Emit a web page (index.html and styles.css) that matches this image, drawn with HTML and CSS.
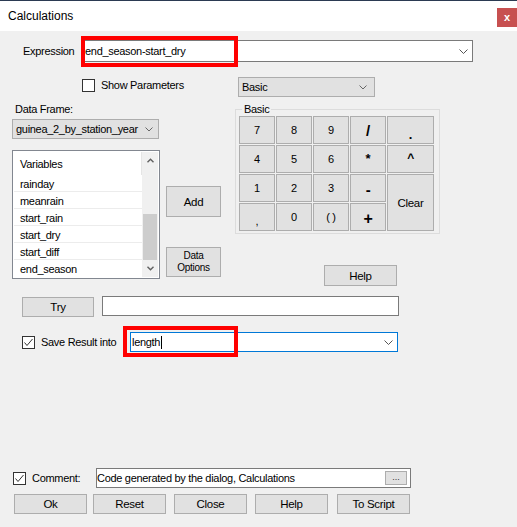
FILE: index.html
```html
<!DOCTYPE html>
<html>
<head>
<meta charset="utf-8">
<title>Calculations</title>
<link rel="stylesheet" href="styles.css">
</head>
<body>
<div class="titlebar">
  <span class="title">Calculations</span>
  <span class="close">x</span>
</div>
<div class="dialog">
  <div class="expr-row">
    <span class="expr-label">Expression</span>
    <div class="combo expr-combo">
      <span>end_season-start_dry</span>
      <svg class="chev" width="9" height="5" viewBox="0 0 9 5"><polyline points="0.5,0.5 4.5,4.5 8.5,0.5" fill="none" stroke="#555" stroke-width="1"/></svg>
      <div class="redmark expr-mark"></div>
    </div>
  </div>

  <div class="params-row">
    <label class="show-params">
      <span class="check"></span>
      <span>Show Parameters</span>
    </label>
    <div class="combo grey basic-combo">
      <span>Basic</span>
      <svg class="chev" width="8" height="5" viewBox="0 0 8 5"><polyline points="0.5,0.5 4,4 7.5,0.5" fill="none" stroke="#666" stroke-width="1"/></svg>
    </div>
  </div>

  <div class="main">
    <div class="left-col">
      <div class="df-label">Data Frame:</div>
      <div class="combo grey df-combo">
        <span>guinea_2_by_station_year</span>
        <svg class="chev" width="8" height="5" viewBox="0 0 8 5"><polyline points="0.5,0.5 4,4 7.5,0.5" fill="none" stroke="#666" stroke-width="1"/></svg>
      </div>
      <div class="listbox">
        <div class="list">
          <div class="list-head">Variables</div>
          <div class="list-item">rainday</div>
          <div class="list-item">meanrain</div>
          <div class="list-item">start_rain</div>
          <div class="list-item">start_dry</div>
          <div class="list-item">start_diff</div>
          <div class="list-item last">end_season</div>
        </div>
        <div class="scrollbar">
          <div class="sb-arrow">
            <svg width="7" height="5" viewBox="0 0 7 5"><polyline points="0.5,4.2 3.5,1.2 6.5,4.2" fill="none" stroke="#606060" stroke-width="1.4"/></svg>
          </div>
          <div class="sb-track"></div>
          <div class="sb-thumb"></div>
          <div class="sb-arrow">
            <svg width="7" height="5" viewBox="0 0 7 5"><polyline points="0.5,0.8 3.5,3.8 6.5,0.8" fill="none" stroke="#606060" stroke-width="1.4"/></svg>
          </div>
        </div>
      </div>
    </div>

    <div class="mid-col">
      <button class="btn add-btn">Add</button>
      <button class="btn dataopt-btn">Data<br>Options</button>
    </div>

    <div class="right-col">
      <div class="groupbox">
        <span class="legend">Basic</span>
        <div class="keypad">
          <button class="btn key">7</button>
          <button class="btn key">8</button>
          <button class="btn key">9</button>
          <button class="btn key op slash">/</button>
          <button class="btn key op dot">.</button>
          <button class="btn key">4</button>
          <button class="btn key">5</button>
          <button class="btn key">6</button>
          <button class="btn key op star">*</button>
          <button class="btn key op caret">^</button>
          <button class="btn key">1</button>
          <button class="btn key">2</button>
          <button class="btn key">3</button>
          <button class="btn key op minus">-</button>
          <button class="btn key clear">Clear</button>
          <button class="btn key comma">,</button>
          <button class="btn key">0</button>
          <button class="btn key">( )</button>
          <button class="btn key op plus">+</button>
        </div>
      </div>
      <button class="btn help-btn">Help</button>
    </div>
  </div>

  <div class="try-row">
    <button class="btn try-btn">Try</button>
    <div class="textbox try-input"></div>
  </div>

  <div class="save-row">
    <label class="save-label">
      <span class="check checked">
        <svg width="11" height="11" viewBox="0 0 11 11"><polyline points="1.5,5.5 4,8.5 9.5,2" fill="none" stroke="#333" stroke-width="1"/></svg>
      </span>
      <span>Save Result into</span>
    </label>
    <div class="combo save-combo">
      <span class="save-text">length<span class="cursor"></span></span>
      <svg class="chev" width="9" height="5" viewBox="0 0 9 5"><polyline points="0.5,0.5 4.5,4.5 8.5,0.5" fill="none" stroke="#555" stroke-width="1"/></svg>
      <div class="redmark save-mark"></div>
    </div>
  </div>

  <div class="comment-row">
    <label class="comment-label">
      <span class="check checked">
        <svg width="11" height="11" viewBox="0 0 11 11"><polyline points="1.5,5.5 4,8.5 9.5,2" fill="none" stroke="#333" stroke-width="1"/></svg>
      </span>
      <span>Comment:</span>
    </label>
    <div class="textbox comment-input">
      <span>Code generated by the dialog, Calculations</span>
      <button class="btn dots">...</button>
    </div>
  </div>

  <div class="buttons-row">
    <button class="btn bottom b-ok">Ok</button>
    <button class="btn bottom b-reset">Reset</button>
    <button class="btn bottom b-close">Close</button>
    <button class="btn bottom b-help">Help</button>
    <button class="btn bottom b-script">To Script</button>
  </div>
</div>
</body>
</html>
```

FILE: styles.css
```css
* { box-sizing: border-box; }
html, body { margin: 0; padding: 0; }
body {
  width: 517px;
  height: 527px;
  overflow: hidden;
  background: #f0f0f0;
  font-family: "Liberation Sans", Arial, sans-serif;
  font-size: 11px;
  letter-spacing: -0.3px;
  color: #000;
}

.titlebar {
  height: 31px;
  background: #fff;
  border-top: 1px solid #2b3a52;
  display: flex;
  justify-content: space-between;
  align-items: flex-start;
}
.title {
  font-size: 12px;
  letter-spacing: 0;
  line-height: 14px;
  margin: 8px 0 0 8px;
}
.close {
  width: 20px;
  height: 19px;
  margin-top: 7px;
  background: #c75050;
  color: #fff;
  font-weight: bold;
  font-size: 11px;
  letter-spacing: 0;
  display: flex;
  align-items: center;
  justify-content: center;
  padding-bottom: 1px;
}

.dialog {
  display: flex;
  flex-direction: column;
  height: 496px;
}

.combo {
  display: flex;
  align-items: center;
  justify-content: space-between;
  background: #fff;
  border: 1px solid #7a7a7a;
  padding: 0 4px 0 3px;
  white-space: nowrap;
}
.combo.grey {
  background: #e1e1e1;
  border-color: #adadad;
}
.chev { flex: none; }

.redmark {
  position: absolute;
  border: 4px solid #ff0000;
  pointer-events: none;
}

/* expression */
.expr-row {
  display: flex;
  align-items: center;
  height: 22px;
  margin-top: 9px;
}
.expr-label {
  width: 81px;
  padding-left: 23px;
}
.expr-combo {
  position: relative;
  width: 392px;
  height: 22px;
}
.expr-mark {
  left: -1px;
  top: -5px;
  width: 157px;
  height: 31px;
}

/* params row */
.params-row {
  display: flex;
  align-items: center;
  height: 20px;
  margin-top: 15px;
}
.show-params {
  align-self: flex-start;
  margin-top: 1px;
  width: 238px;
  padding-left: 82px;
  display: flex;
  align-items: center;
  gap: 6px;
  height: 14px;
}
.check {
  flex: none;
  width: 13px;
  height: 13px;
  border: 1px solid #333;
  background: #fff;
  display: flex;
  align-items: center;
  justify-content: center;
}
.basic-combo {
  width: 137px;
  height: 20px;
  padding-right: 7px;
}

/* main */
.main {
  display: flex;
  margin-top: 6px;
}
.left-col {
  margin-left: 12px;
  width: 148px;
  display: flex;
  flex-direction: column;
}
.df-label {
  height: 13px;
  line-height: 13px;
  padding-left: 3px;
}
.df-combo {
  margin-top: 3px;
  width: 147px;
  height: 20px;
  padding-right: 5px;
}
.listbox {
  margin-top: 11px;
  width: 148px;
  height: 129px;
  border: 1px solid #828790;
  background: #fff;
  display: flex;
}
.list {
  flex: 1;
  padding: 1px 0 0 1px;
  display: flex;
  flex-direction: column;
}
.list-head {
  height: 23px;
  line-height: 24px;
  padding-left: 6px;
  border-right: 1px solid #e5e5e5;
}
.list-item {
  height: 17px;
  line-height: 13px;
  padding-top: 3px;
  padding-left: 6px;
  border-bottom: 1px solid #ececec;
}
.list-item.last { border-bottom: none; }
.scrollbar {
  width: 16px;
  margin: 1px 1px 1px 0;
  background: #f0f0f0;
  display: flex;
  flex-direction: column;
}
.sb-arrow {
  height: 17px;
  display: flex;
  align-items: center;
  justify-content: center;
}
.sb-track { flex: 1; }
.sb-thumb {
  height: 46px;
  margin: 0 1px;
  background: #cdcdcd;
}

.btn {
  font: inherit;
  letter-spacing: inherit;
  color: #000;
  background: #e1e1e1;
  border: 1px solid #adadad;
  padding: 0;
  margin: 0;
  display: flex;
  align-items: center;
  justify-content: center;
  border-radius: 0;
  white-space: nowrap;
}

.mid-col {
  margin-left: 6px;
  width: 55px;
  display: flex;
  flex-direction: column;
}
.add-btn {
  margin-top: 83px;
  height: 31px;
  font-size: 11.5px;
}
.dataopt-btn {
  margin-top: 30px;
  height: 30px;
  font-size: 10px;
  line-height: 12px;
  letter-spacing: -0.3px;
}

.right-col {
  margin-left: 14px;
  display: flex;
  flex-direction: column;
}
.groupbox {
  position: relative;
  margin-top: 6px;
  width: 205px;
  height: 125px;
  border: 1px solid #dcdcdc;
  padding: 6px 5px 2px 3px;
}
.legend {
  position: absolute;
  top: -8px;
  left: 6px;
  padding: 0 2px;
  line-height: 14px;
  background: #f0f0f0;
}
.keypad {
  display: grid;
  grid-template-columns: 36px 36px 36px 36px 47px;
  grid-template-rows: 28px 28px 28px 28px;
  gap: 1px;
}
.key { height: 100%; }
.key.op { font-weight: bold; }
.key.slash { font-size: 15px; }
.key.dot { font-size: 13px; padding-top: 8px; }
.key.star { font-size: 13px; padding-bottom: 2px; }
.key.caret { font-size: 12px; padding-bottom: 3px; }
.key.minus { font-size: 15px; padding-top: 3px; }
.key.plus { font-size: 16px; padding-top: 3px; }
.key.comma { padding-top: 8px; font-size: 11px; }
.key.clear {
  grid-column: 5;
  grid-row: 3 / span 2;
  font-size: 11.5px;
}
.help-btn {
  margin-top: 31px;
  margin-left: 89px;
  width: 73px;
  height: 21px;
  font-size: 11.5px;
}

.textbox {
  background: #fff;
  border: 1px solid #7a7a7a;
}

/* try */
.try-row {
  display: flex;
  align-items: flex-start;
  height: 21px;
  margin-top: 10px;
}
.try-btn {
  margin-left: 22px;
  margin-top: 1px;
  width: 72px;
  height: 20px;
  font-size: 11.5px;
}
.try-input {
  margin-left: 8px;
  width: 297px;
  height: 20px;
}

/* save */
.save-row {
  display: flex;
  align-items: center;
  height: 20px;
  margin-top: 15px;
}
.save-label {
  width: 130px;
  padding-left: 22px;
  display: flex;
  align-items: center;
  gap: 6px;
}
.save-combo {
  position: relative;
  width: 268px;
  height: 20px;
  border-color: #0078d7;
  padding: 0 4px 0 1px;
}
.save-text { display: flex; align-items: center; }
.cursor {
  display: inline-block;
  width: 1px;
  height: 13px;
  margin-left: 1px;
  background: #000;
}
.save-mark {
  left: -8px;
  top: -7px;
  width: 115px;
  height: 31px;
}

/* comment */
.comment-row {
  display: flex;
  align-items: center;
  height: 20px;
  margin-top: 116px;
}
.comment-label {
  width: 96px;
  padding-left: 13px;
  display: flex;
  align-items: center;
  gap: 6px;
}
.comment-input {
  width: 315px;
  height: 20px;
  display: flex;
  align-items: center;
  justify-content: space-between;
  padding: 0 3px 0 0;
}
.dots {
  width: 22px;
  height: 14px;
  font-size: 9px;
  letter-spacing: 0;
  color: #333;
  padding-bottom: 3px;
}

/* bottom buttons */
.buttons-row {
  display: flex;
  height: 20px;
  margin-top: 6px;
}
.bottom {
  width: 73px;
  height: 20px;
  font-size: 11.5px;
}
.b-ok { margin-left: 14px; }
.b-reset { margin-left: 6px; }
.b-close { margin-left: 8px; }
.b-help { margin-left: 8px; }
.b-script { margin-left: 9px; }
```
